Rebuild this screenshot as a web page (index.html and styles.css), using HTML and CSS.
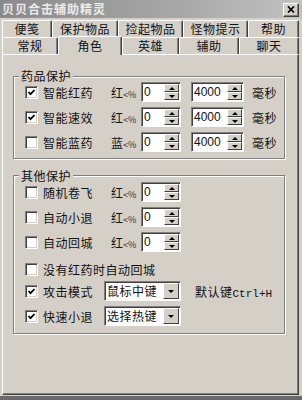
FILE: index.html
```html
<!DOCTYPE html>
<html lang="zh">
<head>
  <meta charset="UTF-8">
  <title>贝贝合击辅助精灵</title>
  <link rel="stylesheet" href="styles.css">
</head>
<body>
  <div class="window">
    <div class="titlebar">
      <span class="title">贝贝合击辅助精灵</span>
      <span class="close">
        <svg width="8" height="7" viewBox="0 0 8 7"><path d="M1 0.5 L7 6.5 M7 0.5 L1 6.5" stroke="#000" stroke-width="1.7"/></svg>
      </span>
    </div>

    <div class="tabs">
      <div class="tab-row">
        <div class="tab w50">便笺</div>
        <div class="tab w66">保护物品</div>
        <div class="tab w65">捡起物品</div>
        <div class="tab w65">怪物提示</div>
        <div class="tab w51">帮助</div>
      </div>
      <div class="tab-row">
        <div class="tab w56">常规</div>
        <div class="tab w64 active">角色</div>
        <div class="tab w57">英雄</div>
        <div class="tab w60">辅助</div>
        <div class="tab w60">聊天</div>
      </div>
    </div>

    <div class="panel">
      <div class="group">
        <span class="legend">药品保护</span>
        <div class="row">
          <span class="check on"><svg width="9" height="9" viewBox="0 0 9 9"><path d="M1.5 4 L3.5 6.2 L7.5 2" fill="none" stroke="#000" stroke-width="1.8"/></svg></span>
          <span class="label">智能红药</span>
          <span class="unit">红<small>&lt;%</small></span>
          <div class="spin"><span class="val">0</span><span class="btns"><i class="up"></i><i class="down"></i></span></div>
          <div class="spin wide"><span class="val">4000</span><span class="btns"><i class="up"></i><i class="down"></i></span></div>
          <span class="ms">毫秒</span>
        </div>
        <div class="row">
          <span class="check on"><svg width="9" height="9" viewBox="0 0 9 9"><path d="M1.5 4 L3.5 6.2 L7.5 2" fill="none" stroke="#000" stroke-width="1.8"/></svg></span>
          <span class="label">智能速效</span>
          <span class="unit">红<small>&lt;%</small></span>
          <div class="spin"><span class="val">0</span><span class="btns"><i class="up"></i><i class="down"></i></span></div>
          <div class="spin wide"><span class="val">4000</span><span class="btns"><i class="up"></i><i class="down"></i></span></div>
          <span class="ms">毫秒</span>
        </div>
        <div class="row">
          <span class="check"></span>
          <span class="label">智能蓝药</span>
          <span class="unit">蓝<small>&lt;%</small></span>
          <div class="spin"><span class="val">0</span><span class="btns"><i class="up"></i><i class="down"></i></span></div>
          <div class="spin wide"><span class="val">4000</span><span class="btns"><i class="up"></i><i class="down"></i></span></div>
          <span class="ms">毫秒</span>
        </div>
      </div>

      <div class="group other">
        <span class="legend">其他保护</span>
        <div class="row">
          <span class="check"></span>
          <span class="label">随机卷飞</span>
          <span class="unit">红<small>&lt;%</small></span>
          <div class="spin"><span class="val">0</span><span class="btns"><i class="up"></i><i class="down"></i></span></div>
        </div>
        <div class="row">
          <span class="check"></span>
          <span class="label">自动小退</span>
          <span class="unit">红<small>&lt;%</small></span>
          <div class="spin"><span class="val">0</span><span class="btns"><i class="up"></i><i class="down"></i></span></div>
        </div>
        <div class="row">
          <span class="check"></span>
          <span class="label">自动回城</span>
          <span class="unit">红<small>&lt;%</small></span>
          <div class="spin"><span class="val">0</span><span class="btns"><i class="up"></i><i class="down"></i></span></div>
        </div>
        <div class="row plain">
          <span class="check"></span>
          <span class="label">没有红药时自动回城</span>
        </div>
        <div class="row">
          <span class="check on"><svg width="9" height="9" viewBox="0 0 9 9"><path d="M1.5 4 L3.5 6.2 L7.5 2" fill="none" stroke="#000" stroke-width="1.8"/></svg></span>
          <span class="label short">攻击模式</span>
          <div class="select"><span class="val">鼠标中键</span><span class="drop"><i class="down"></i></span></div>
          <span class="hint">默认键<span class="mono">Ctrl+H</span></span>
        </div>
        <div class="row">
          <span class="check on"><svg width="9" height="9" viewBox="0 0 9 9"><path d="M1.5 4 L3.5 6.2 L7.5 2" fill="none" stroke="#000" stroke-width="1.8"/></svg></span>
          <span class="label short">快速小退</span>
          <div class="select"><span class="val">选择热键</span><span class="drop"><i class="down"></i></span></div>
        </div>
      </div>
    </div>
  </div>
</body>
</html>
```

FILE: styles.css
```css
body { margin: 0; width: 302px; height: 400px; background: #d4d0c8; font-family: "Noto Sans CJK SC", sans-serif; font-size: 12px; color: #111; overflow: hidden; }
.window { height: 400px; box-sizing: border-box; display: flex; flex-direction: column; border-bottom: 4px solid #6a6a6a; }

/* title bar */
.titlebar { height: 18px; flex: none; display: flex; align-items: center; justify-content: space-between; padding: 0 3px 0 2px; background: linear-gradient(90deg, #8a8a8a, #a8a8a8 60%, #c2c2c2); }
.title { color: #ececec; font-weight: bold; letter-spacing: 1px; line-height: 16px; }
.close { width: 16px; height: 14px; box-sizing: border-box; display: flex; align-items: center; justify-content: center; background: #d4d0c8; border: 1px solid; border-color: #fff #404040 #404040 #fff; box-shadow: inset -1px -1px 0 #808080; margin-top: 1px; }

/* tabs */
.tabs { margin-top: 2px; padding-left: 2px; flex: none; }
.tab-row { display: flex; height: 17px; }
.tab { box-sizing: border-box; height: 17px; text-align: center; line-height: 15px; letter-spacing: .5px; border-top: 1px solid #fff; border-left: 1px solid #fff; border-right: 1px solid #404040; box-shadow: inset -1px 0 0 #808080; border-radius: 2px 2px 0 0; background: #d4d0c8; }
.tab.active { position: relative; z-index: 1; height: 19px; margin-top: -1px; margin-bottom: -1px; line-height: 17px; }
.w50 { width: 50px; } .w51 { width: 51px; } .w56 { width: 56px; } .w57 { width: 57px; }
.w60 { width: 60px; } .w64 { width: 64px; } .w65 { width: 65px; } .w66 { width: 66px; }

/* panel */
.panel { flex: 1; margin: 0 3px 1px 2px; border: 1px solid; border-color: #fff #404040 #404040 #fff; box-shadow: inset -1px -1px 0 #808080; }
.group { margin: 21px 13px 0 10px; border: 1px solid #808080; box-shadow: inset 1px 1px 0 #fff, 1px 1px 0 #fff; padding: 0 0 6px 11px; display: flex; flex-direction: column; gap: 5px; }
.group.other { margin-top: 16px; padding-top: 1px; padding-bottom: 7px; }
.legend { align-self: flex-start; margin: -8px 0 -6px -6px; padding: 0 2px; line-height: 14px; background: #d4d0c8; letter-spacing: .5px; }

.row { display: flex; align-items: center; height: 20px; }
.row.plain { margin-top: 2px; margin-bottom: -3px; }
.check { width: 13px; height: 13px; box-sizing: border-box; flex: none; background: #fff; border: 1px solid; border-color: #808080 #fff #fff #808080; box-shadow: inset 1px 1px 0 #404040, inset -1px -1px 0 #d4d0c8; margin-right: 5px; display: flex; align-items: center; justify-content: center; }
.label { width: 68px; flex: none; letter-spacing: .5px; white-space: nowrap; }
.label.short { width: 61px; }
.unit { width: 30px; flex: none; }
.unit small { font-size: 9px; color: #333; }

.spin, .select { height: 20px; box-sizing: border-box; flex: none; display: flex; background: #fff; border: 1px solid; border-color: #808080 #fff #fff #808080; box-shadow: inset 1px 1px 0 #404040; padding: 1px 1px 1px 1px; }
.spin { width: 40px; }
.spin.wide { width: 53px; margin-left: 10px; }
.val { flex: 1; line-height: 16px; padding-left: 1px; font-family: "Liberation Sans", sans-serif; font-size: 12px; overflow: hidden; white-space: nowrap; }
.select .val { font-family: "Noto Sans CJK SC", sans-serif; letter-spacing: .5px; }
.btns { width: 15px; display: flex; flex-direction: column; }
.btns i, .drop { flex: 1; box-sizing: border-box; display: flex; align-items: center; justify-content: center; background: #d4d0c8; border: 1px solid; border-color: #fff #404040 #404040 #fff; }
.select { width: 77px; }
.drop { flex: none; width: 16px; }
.up::after { content: ""; border-left: 3px solid transparent; border-right: 3px solid transparent; border-bottom: 3px solid #000; }
.down::after { content: ""; border-left: 3px solid transparent; border-right: 3px solid transparent; border-top: 3px solid #000; }
.drop i { display: flex; }
.ms { margin-left: 8px; letter-spacing: .5px; }
.hint { margin-left: 14px; letter-spacing: .5px; }
.mono { font-family: "Liberation Mono", monospace; font-size: 11px; letter-spacing: 0; }
```
